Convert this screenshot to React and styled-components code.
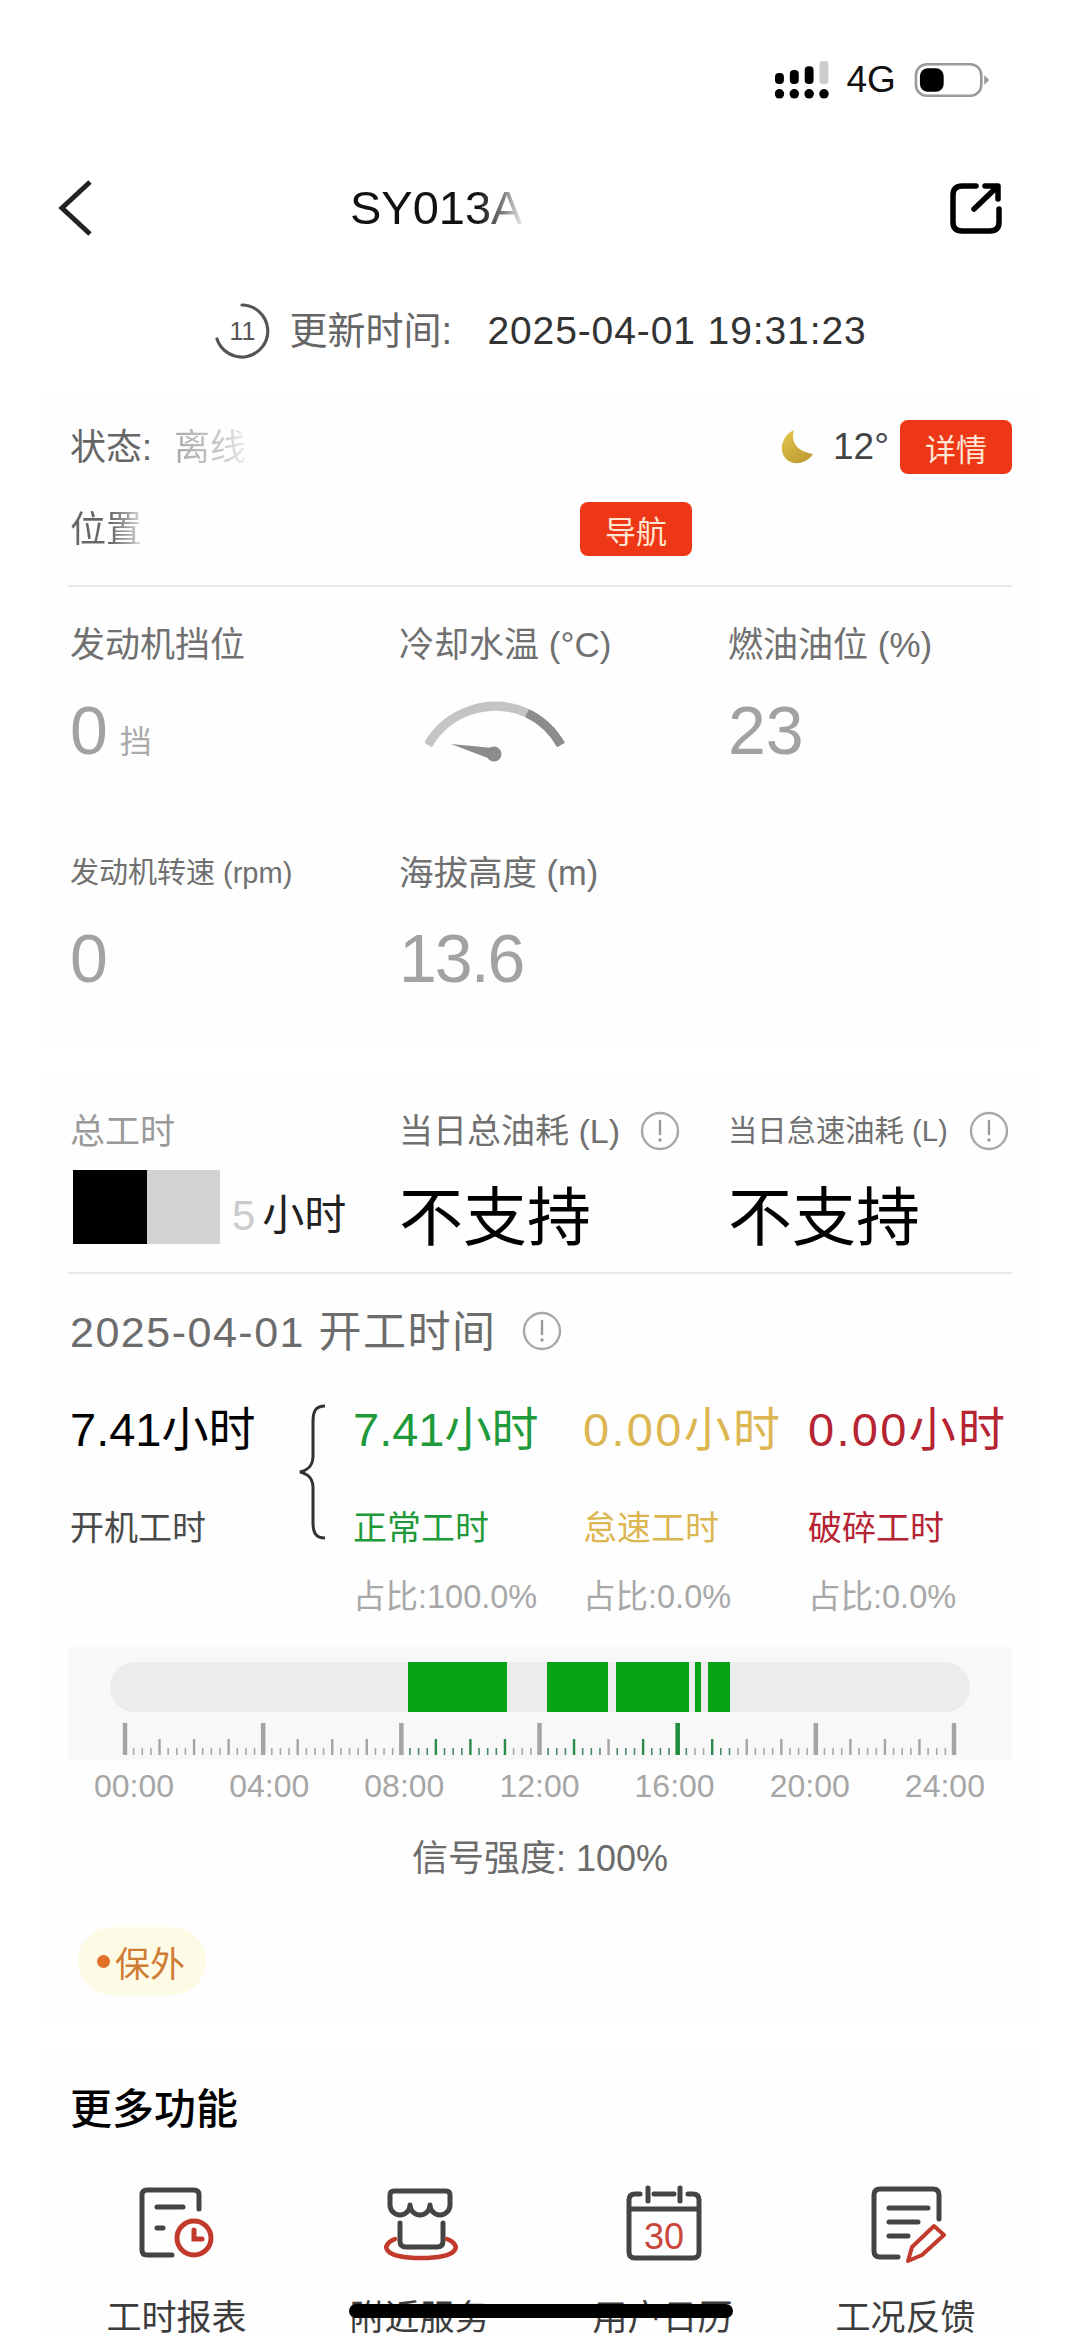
import React from "react";
import styled, { createGlobalStyle } from "styled-components";

const Global = createGlobalStyle`
  html, body { margin: 0; padding: 0; background: #fff; }
  body { font-family: "Liberation Sans", "Noto Sans CJK SC", sans-serif; }
  * { box-sizing: border-box; }
`;

const Page = styled.div`
  position: relative;
  width: 1080px;
  height: 2341px;
  overflow: hidden;
  background: #fff;
`;

const StatusBar = styled.div`
  height: 178px;
  padding: 61px 89px 0 775px;
  display: flex;
  align-items: flex-start;
`;
const Signal = styled.svg`
  width: 58px;
  height: 38px;
  display: block;
`;
const Network = styled.span`
  margin-left: 14px;
  width: 52px;
  font-size: 37px;
  line-height: 38px;
  color: #111;
`;
const Battery = styled.svg`
  margin-left: 16px;
  width: 78px;
  height: 38px;
  display: block;
`;

const Header = styled.header`
  height: 60px;
  padding: 0 78px 0 56px;
  display: flex;
  align-items: center;
`;
const Title = styled.h1`
  margin: 0 0 0 254px;
  font-size: 47px;
  font-weight: 400;
  line-height: 60px;
  color: #111;
  background: linear-gradient(90deg, #111 0, #111 128px, #888 155px, #eee 173px);
  -webkit-background-clip: text;
  background-clip: text;
  -webkit-text-fill-color: transparent;
`;
const HeadIcon = styled.svg`
  display: block;
  margin-left: ${(p) => p.$auto ? "auto" : "0"};
`;

const UpdateRow = styled.div`
  margin-top: 64px;
  height: 58px;
  display: flex;
  align-items: center;
  justify-content: center;
`;
const Timer = styled.div`
  position: relative;
  width: 58px;
  height: 58px;
  margin-right: 18px;
`;
const TimerCount = styled.span`
  position: absolute;
  inset: 0;
  display: flex;
  align-items: center;
  justify-content: center;
  font-size: 25px;
  color: #555;
`;
const UpdateLabel = styled.span`
  font-size: 38px;
  line-height: 44px;
  color: #666;
  width: 198px;
`;
const UpdateTime = styled.span`
  font-size: 39px;
  letter-spacing: 0.9px;
  line-height: 44px;
  color: #333;
`;

const Card = styled.section`
  margin: ${(p) => p.$top}px 40px 0;
  padding: ${(p) => p.$pad}px 28px ${(p) => p.$bottom || 0}px 30px;
  background: #fefefe;
`;

const StatusRow = styled.div`
  height: 54px;
  display: flex;
  align-items: center;
  font-size: 36px;
  color: #666;
  margin-top: ${(p) => p.$gap || 0}px;
`;
const RowText = styled.span`
  margin-top: -6px;
`;
const FadedValue = styled.span`
  margin: -6px 0 0 22px;
  color: #b5b5b5;
  filter: blur(0.6px);
  background: linear-gradient(90deg, #aaa, #ccc 70%, #eee);
  -webkit-background-clip: text;
  background-clip: text;
  -webkit-text-fill-color: transparent;
`;
const FadedLabel = styled.span`
  margin-top: -6px;
  background: linear-gradient(90deg, #666 0, #666 40px, #aaa 60px, #f2f2f2 75px);
  -webkit-background-clip: text;
  background-clip: text;
  -webkit-text-fill-color: transparent;
`;
const Weather = styled.div`
  margin-left: auto;
  display: flex;
  align-items: center;
`;
const Temp = styled.span`
  margin: 0 11px 0 19px;
  font-size: 37px;
  color: #444;
`;
const RedButton = styled.button`
  width: 112px;
  height: 54px;
  padding: 0;
  border: 0;
  border-radius: 8px;
  background: #ee3717;
  color: #ffe6d2;
  font: 31px "Liberation Sans", "Noto Sans CJK SC", sans-serif;
  margin-left: ${(p) => p.$left || 0}px;
`;
const Divider = styled.div`
  height: 2px;
  margin: ${(p) => p.$top}px 0 0 -2px;
  background: #e8e8e8;
`;

const MetricGrid = styled.div`
  display: grid;
  grid-template-columns: 329px 329px 1fr;
  grid-auto-rows: 228px;
`;
const Metric = styled.div`
  padding-top: 39px;
`;
const MetricLabel = styled.div`
  font-size: ${(p) => p.$size}px;
  line-height: 38px;
  color: #707070;
  white-space: nowrap;
`;
const MetricValue = styled.div`
  margin-top: 28px;
  height: 76px;
  display: flex;
  align-items: center;
  font-size: 68px;
  letter-spacing: ${(p) => p.$track || 0}px;
  color: #a2a2a2;
`;
const Unit = styled.span`
  margin: 18px 0 0 12px;
  font-size: 32px;
  color: #aaa;
`;
const Gauge = styled.svg`
  margin: 6px 0 0 26px;
  display: block;
`;

const FuelGrid = styled.div`
  display: grid;
  grid-template-columns: 329px 329px 1fr;
`;
const FuelLabel = styled.div`
  display: flex;
  align-items: center;
  height: 38px;
  font-size: ${(p) => p.$size}px;
  color: ${(p) => p.$color || "#707070"};
  white-space: nowrap;
`;
const FuelText = styled.span`
  margin-top: -6px;
`;
const InfoIcon = styled.svg`
  display: block;
  flex: none;
  margin-left: ${(p) => p.$left}px;
`;
const TotalCell = styled.div`
  height: 74px;
  margin-top: 20px;
  display: flex;
  align-items: center;
`;
const Redact = styled.div`
  width: ${(p) => p.$w}px;
  height: 74px;
  margin-left: ${(p) => p.$left || 0}px;
  background: ${(p) => p.$color};
`;
const TotalFive = styled.span`
  margin: 18px 0 0 12px;
  font-size: 42px;
  line-height: 46px;
  color: #ccc;
`;
const TotalUnit = styled.span`
  margin: 18px 0 0 7px;
  font-size: 42px;
  line-height: 46px;
  color: #222;
`;
const Unsupported = styled.div`
  height: 74px;
  margin-top: 20px;
  padding-top: 11px;
  font-size: 64px;
  line-height: 74px;
  color: #000;
  white-space: nowrap;
`;

const DateRow = styled.div`
  margin-top: 38px;
  height: 38px;
  display: flex;
  align-items: center;
  font-size: 43px;
  letter-spacing: 1.5px;
  color: #6c6c6c;
`;
const DateText = styled.span`
  margin-top: -6px;
`;

const Hours = styled.div`
  margin-top: 56px;
  display: grid;
  grid-template-columns: 228px 55px 230px 225px auto;
`;
const HourColumn = styled.div`
  display: flex;
  flex-direction: column;
`;
const HourValue = styled.div`
  height: 48px;
  font-size: 47px;
  line-height: 48px;
  letter-spacing: ${(p) => p.$track || 0}px;
  color: ${(p) => p.$color};
  white-space: nowrap;
`;
const HourLabel = styled.div`
  margin-top: 55px;
  height: 38px;
  font-size: 34px;
  line-height: 38px;
  color: ${(p) => p.$color};
  white-space: nowrap;
`;
const HourShare = styled.div`
  margin-top: 30px;
  height: 40px;
  font-size: 32.5px;
  line-height: 40px;
  color: #a8a8a8;
  white-space: nowrap;
`;
const Brace = styled.svg`
  display: block;
  margin-top: -2px;
`;

const Timeline = styled.svg`
  display: block;
  margin: 30px 0 0 -2px;
`;
const TimeLabels = styled.div`
  margin: 8px 0 0 24px;
  width: 891px;
  height: 36px;
  display: flex;
  justify-content: space-between;
  font-size: 32px;
  line-height: 36px;
  color: #a6a6a6;
`;
const SignalText = styled.div`
  margin-top: 36px;
  height: 38px;
  padding-right: 2px;
  text-align: center;
  font-size: 36px;
  line-height: 38px;
  color: #6c6c6c;
`;
const Badge = styled.div`
  margin: 49px 0 0 8px;
  width: 128px;
  height: 68px;
  padding-left: 19px;
  display: flex;
  align-items: center;
  gap: 5px;
  border-radius: 34px;
  background: #fdfbe6;
  font-size: 35px;
  color: #cf7c34;
`;
const BadgeDot = styled.span`
  width: 13px;
  height: 13px;
  border-radius: 50%;
  background: #e2702a;
`;

const MoreTitle = styled.h2`
  margin: 0;
  font-size: 42px;
  line-height: 46px;
  font-weight: 500;
  color: #000;
`;
const Functions = styled.div`
  margin: 52px 0 0 -15px;
  width: 972px;
  display: grid;
  grid-template-columns: repeat(4, 243px);
`;
const FunctionItem = styled.div`
  display: flex;
  flex-direction: column;
  align-items: center;
`;
const FunctionIcon = styled.svg`
  display: block;
`;
const FunctionLabel = styled.div`
  margin-top: 34px;
  font-size: 35px;
  line-height: 38px;
  color: #3c3c3c;
  white-space: nowrap;
`;
const HomeBar = styled.div`
  position: absolute;
  left: 349px;
  top: 2304px;
  width: 384px;
  height: 14px;
  border-radius: 7px;
  background: #000;
`;

const Info = ({ left }) => (
  <InfoIcon $left={left} width="40" height="40" viewBox="0 0 40 40" fill="none">
    <circle cx="20" cy="20" r="18" stroke="#a8a8a8" strokeWidth="2.4" />
    <path d="M20 10v13" stroke="#999" strokeWidth="2.4" strokeLinecap="round" />
    <circle cx="20" cy="29" r="1.7" fill="#999" />
  </InfoIcon>
);

const SEGMENTS = [[408, 507], [547, 608], [616, 689], [695, 701], [708, 730]];
const inSegment = (x) => SEGMENTS.some(([a, b]) => x >= a && x <= b);

const TimelineChart = () => {
  const ticks = Array.from({ length: 97 }, (_, i) => {
    const x = 125 + (i * 829) / 96;
    const major = i % 16 === 0;
    const medium = i % 4 === 0;
    const top = major ? 76 : medium ? 92 : 101;
    const w = major ? 4.5 : medium ? 2.4 : 1.6;
    const green = inSegment(x);
    const color = green ? (major ? "#1f8a3c" : medium ? "#2c8a4c" : "#4f8a60") : major ? "#a4a4a4" : medium ? "#a4a4a4" : "#a8a8a8";
    return <rect key={i} x={x - 68 - w / 2} y={top} width={w} height={108 - top} fill={color} />;
  });
  return (
    <Timeline width="944" height="113" viewBox="0 0 944 113">
      <rect width="944" height="113" fill="#f8f8f8" />
      <rect x="42" y="15" width="860" height="50" rx="25" fill="#ececec" />
      {SEGMENTS.map(([a, b]) => (
        <rect key={a} x={a - 68} y="15" width={b - a} height="50" fill="#05a315" />
      ))}
      {ticks}
    </Timeline>
  );
};

const HOURS = [
  { value: "7.41小时", label: "正常工时", share: "占比:100.0%", color: "#1f9a3a", track: 0 },
  { value: "0.00小时", label: "怠速工时", share: "占比:0.0%", color: "#dcb650", track: 2.3 },
  { value: "0.00小时", label: "破碎工时", share: "占比:0.0%", color: "#b62332", track: 2.3 },
];

const TIMES = ["00:00", "04:00", "08:00", "12:00", "16:00", "20:00", "24:00"];

export default function App() {
  return (
    <Page>
      <Global />
      <StatusBar>
        <Signal viewBox="0 0 58 38">
          <g fill="#000">
            <rect x="0" y="12" width="9" height="11" rx="4" />
            <rect x="15" y="9" width="9" height="14" rx="4" />
            <rect x="30" y="5" width="9" height="18" rx="4" />
            <circle cx="4.5" cy="33" r="4.8" />
            <circle cx="19.5" cy="33" r="4.8" />
            <circle cx="34.5" cy="33" r="4.8" />
            <circle cx="49.5" cy="33" r="4.8" />
          </g>
          <rect x="45" y="0" width="9" height="23" rx="3" fill="#ccc" />
        </Signal>
        <Network>4G</Network>
        <Battery viewBox="0 0 78 38">
          <rect x="2" y="3" width="66" height="32" rx="11" fill="#fff" stroke="#999" strokeWidth="2.6" />
          <rect x="6" y="7" width="24" height="24" rx="8" fill="#000" />
          <path d="M71 14l5 5-5 5z" fill="#999" />
        </Battery>
      </StatusBar>

      <Header>
        <HeadIcon width="40" height="60" viewBox="0 0 40 60" fill="none">
          <path d="M34 4L6 30l28 26" stroke="#222" strokeWidth="5" />
        </HeadIcon>
        <Title>SY013A</Title>
        <HeadIcon $auto width="52" height="52" viewBox="0 0 52 52" fill="none">
          <path d="M26 4H12Q3 4 3 13V40Q3 49 12 49H40Q49 49 49 40V27" stroke="#000" strokeWidth="5.5" strokeLinecap="round" />
          <path d="M24 27L47 5M35 4H48V17" stroke="#000" strokeWidth="5.5" strokeLinecap="round" strokeLinejoin="round" />
        </HeadIcon>
      </Header>

      <UpdateRow>
        <Timer>
          <svg width="58" height="58" viewBox="0 0 58 58" fill="none">
            <path d="M29 3A26 26 0 1 1 4 37" stroke="#555" strokeWidth="3.2" strokeLinecap="round" />
          </svg>
          <TimerCount>11</TimerCount>
        </Timer>
        <UpdateLabel>更新时间:</UpdateLabel>
        <UpdateTime>2025-04-01 19:31:23</UpdateTime>
      </UpdateRow>

      <Card $top={35} $pad={25}>
        <StatusRow>
          <RowText>状态:</RowText>
          <FadedValue>离线</FadedValue>
          <Weather>
            <svg width="34" height="36" viewBox="0 0 34 36">
              <defs>
                <linearGradient id="moon" x1="0" y1="0" x2="0.7" y2="1">
                  <stop offset="0" stopColor="#e6c94e" />
                  <stop offset="1" stopColor="#bf9a32" />
                </linearGradient>
              </defs>
              <path d="M14 1C11 10 14 22 33 25C27 35 13 37 6 30C-2 22 2 6 14 1Z" fill="url(#moon)" />
            </svg>
            <Temp>12°</Temp>
            <RedButton>详情</RedButton>
          </Weather>
        </StatusRow>
        <StatusRow $gap={28}>
          <FadedLabel>位置</FadedLabel>
          <RedButton $left={438}>导航</RedButton>
        </StatusRow>
        <Divider $top={29} />
        <MetricGrid>
          <Metric>
            <MetricLabel $size={35}>发动机挡位</MetricLabel>
            <MetricValue>0<Unit>挡</Unit></MetricValue>
          </Metric>
          <Metric>
            <MetricLabel $size={35}>冷却水温 (°C)</MetricLabel>
            <MetricValue>
              <Gauge width="140" height="66" viewBox="0 0 140 66" fill="none">
                <path d="M3 45A78 78 0 0 1 102 13" stroke="#c4c4c4" strokeWidth="9" />
                <path d="M102 13A78 78 0 0 1 136 45" stroke="#8c8c8c" strokeWidth="9" />
                <path d="M26 44L68 48L68 60Z" fill="#8c8c8c" />
                <circle cx="69" cy="54" r="7.5" fill="#8c8c8c" />
              </Gauge>
            </MetricValue>
          </Metric>
          <Metric>
            <MetricLabel $size={35}>燃油油位 (%)</MetricLabel>
            <MetricValue>23</MetricValue>
          </Metric>
          <Metric>
            <MetricLabel $size={29}>发动机转速 (rpm)</MetricLabel>
            <MetricValue>0</MetricValue>
          </Metric>
          <Metric>
            <MetricLabel $size={34.5}>海拔高度 (m)</MetricLabel>
            <MetricValue $track={-2}>13.6</MetricValue>
          </Metric>
        </MetricGrid>
      </Card>

      <Card $top={28} $pad={41} $bottom={27}>
        <FuelGrid>
          <div>
            <FuelLabel $size={35} $color="#9a9a9a"><FuelText>总工时</FuelText></FuelLabel>
            <TotalCell>
              <Redact $w={74} $left={3} $color="#000" />
              <Redact $w={73} $color="#d2d2d2" />
              <TotalFive>5</TotalFive>
              <TotalUnit>小时</TotalUnit>
            </TotalCell>
          </div>
          <div>
            <FuelLabel $size={34}><FuelText>当日总油耗 (L)</FuelText><Info left={20} /></FuelLabel>
            <Unsupported>不支持</Unsupported>
          </div>
          <div>
            <FuelLabel $size={29.3}><FuelText>当日怠速油耗 (L)</FuelText><Info left={21} /></FuelLabel>
            <Unsupported>不支持</Unsupported>
          </div>
        </FuelGrid>
        <Divider $top={28} />
        <DateRow><DateText>2025-04-01 开工时间</DateText><Info left={26} /></DateRow>
        <Hours>
          <HourColumn>
            <HourValue $color="#000">7.41小时</HourValue>
            <HourLabel $color="#4a4a4a">开机工时</HourLabel>
          </HourColumn>
          <Brace width="28" height="136" viewBox="0 0 28 136" fill="none">
            <path d="M27 2C17 2 15 8 15 18V52C15 62 10 66 2 68C10 70 15 74 15 84V118C15 128 17 134 27 134" stroke="#333" strokeWidth="3" />
          </Brace>
          {HOURS.map((h) => (
            <HourColumn key={h.label}>
              <HourValue $color={h.color} $track={h.track}>{h.value}</HourValue>
              <HourLabel $color={h.color}>{h.label}</HourLabel>
              <HourShare>{h.share}</HourShare>
            </HourColumn>
          ))}
        </Hours>
        <TimelineChart />
        <TimeLabels>
          {TIMES.map((t) => <span key={t}>{t}</span>)}
        </TimeLabels>
        <SignalText>信号强度: 100%</SignalText>
        <Badge><BadgeDot />保外</Badge>
      </Card>

      <Card $top={32} $pad={33}>
        <MoreTitle>更多功能</MoreTitle>
        <Functions>
          <FunctionItem>
            <FunctionIcon width="80" height="80" viewBox="0 0 80 80" fill="none" strokeWidth="5" strokeLinecap="round">
              <path d="M62 24V10Q62 5 57 5H10Q5 5 5 10V65Q5 70 10 70H35" stroke="#444" />
              <path d="M20 22H46M20 43H26" stroke="#444" />
              <circle cx="57" cy="53" r="17" stroke="#c23a2c" />
              <path d="M57 45V54H65" stroke="#c23a2c" />
            </FunctionIcon>
            <FunctionLabel>工时报表</FunctionLabel>
          </FunctionItem>
          <FunctionItem>
            <FunctionIcon width="80" height="80" viewBox="0 0 80 80" fill="none" strokeWidth="5" strokeLinecap="round">
              <path d="M10 10Q10 6 14 6H66Q70 6 70 10V20A10 10 0 0 1 50 20A10 10 0 0 1 30 20A10 10 0 0 1 10 20Z" stroke="#444" strokeLinejoin="round" />
              <path d="M20 38V56Q20 62 26 62H57Q63 62 63 56V38" stroke="#444" />
              <path d="M15 54C0 60 2 73 41 73C80 73 82 60 67 54" stroke="#c23a2c" strokeWidth="4.5" />
            </FunctionIcon>
            <FunctionLabel>附近服务</FunctionLabel>
          </FunctionItem>
          <FunctionItem>
            <FunctionIcon width="80" height="80" viewBox="0 0 80 80" fill="none" strokeWidth="5" strokeLinecap="round">
              <path d="M17 9H12Q6 9 6 15V67Q6 73 12 73H70Q76 73 76 67V15Q76 9 70 9H65M31 9H51M25 3V16M57 3V16M6 24H76" stroke="#444" />
              <text x="41" y="64" textAnchor="middle" fontSize="36" fontFamily="Liberation Sans" fill="#c9473c" stroke="none">30</text>
            </FunctionIcon>
            <FunctionLabel>用户日历</FunctionLabel>
          </FunctionItem>
          <FunctionItem>
            <FunctionIcon width="80" height="80" viewBox="0 0 80 80" fill="none" strokeWidth="5" strokeLinecap="round">
              <path d="M73 34V10Q73 4 67 4H14Q8 4 8 10V66Q8 72 14 72H32" stroke="#444" />
              <path d="M23 23H62M23 37H52M23 51H42" stroke="#444" />
              <path d="M42 76L46 62L68 41L78 50L56 70Z" stroke="#c23a2c" strokeWidth="4" strokeLinejoin="round" />
            </FunctionIcon>
            <FunctionLabel>工况反馈</FunctionLabel>
          </FunctionItem>
        </Functions>
      </Card>
      <HomeBar />
    </Page>
  );
}
